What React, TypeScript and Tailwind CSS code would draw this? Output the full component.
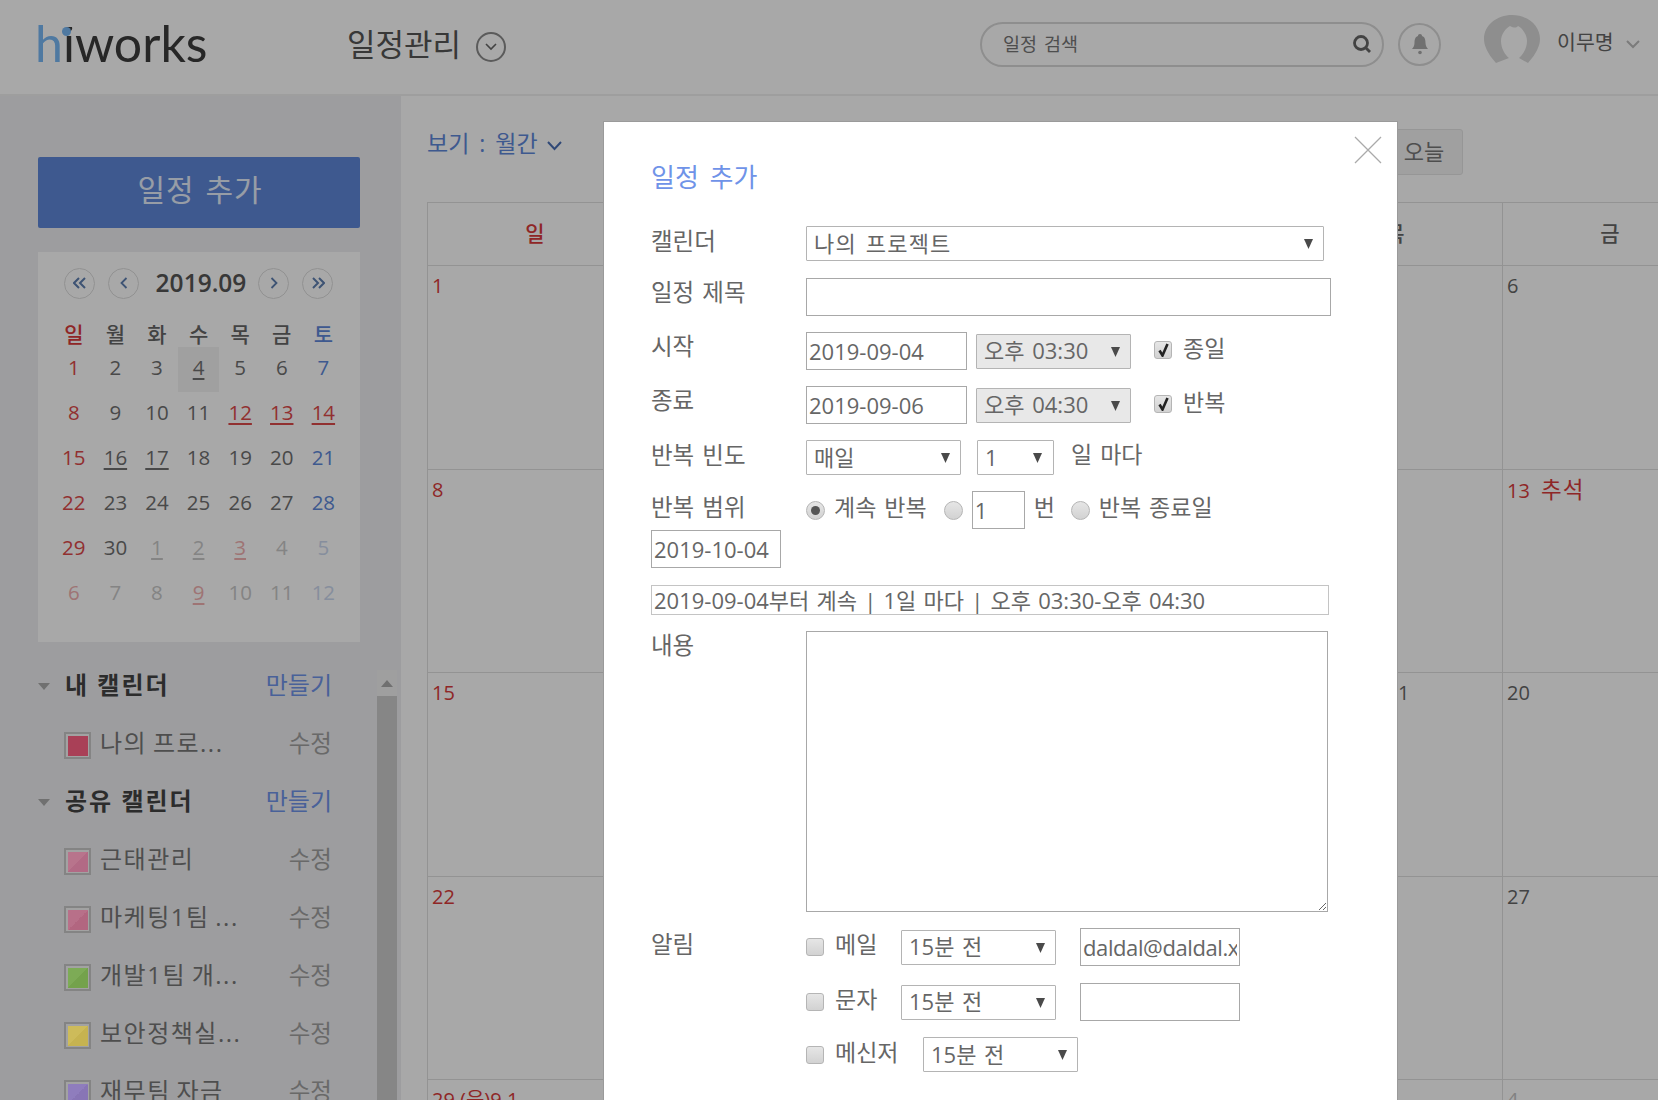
import React from "react";

const FONT = '"Open Sans","Noto Sans CJK KR",sans-serif';

const Arrow = () => (
  <svg width="9" height="11" viewBox="0 0 9 11" className="shrink-0">
    <path d="M0 1h9L4.500 11z" fill="#4a4a4a" />
  </svg>
);

function Select({ w, h = 35, text, disabled, pr = 10, className = "" }: { w: number; h?: number; text: string; disabled?: boolean; pr?: number; className?: string }) {
  return (
    <div
      style={{ width: w, height: h, paddingRight: pr }}
      className={`flex items-center justify-between shrink-0 rounded-[1px] border border-[#b4b4b4] pl-[7px] text-[22px] leading-[26px] text-[#666] [word-spacing:2px] ${disabled ? "bg-[#e8e8e8]" : "bg-white"} ${className}`}
    >
      <span className="pb-[2px]">{text}</span>
      <Arrow />
    </div>
  );
}

function Input({ w, h = 38, value = "", className = "" }: { w: number; h?: number; value?: string; className?: string }) {
  return (
    <input
      readOnly
      value={value}
      style={{ width: w, height: h }}
      className={`shrink-0 border border-[#a8a8a8] bg-white px-[2px] text-[22px] text-[#666] outline-none ${className}`}
    />
  );
}

function Check({ on, className = "" }: { on?: boolean; className?: string }) {
  return (
    <span className={`flex h-[18px] w-[18px] shrink-0 items-center justify-center rounded-[3px] border border-[#b5b5b5] bg-gradient-to-b from-[#e6e6e6] to-[#d2d2d2] ${className}`}>
      {on && (
        <svg width="13" height="14" viewBox="0 0 13 14">
          <path d="M2.500 7.500l3 5 5-11.500" fill="none" stroke="#222" strokeWidth="2.600" />
        </svg>
      )}
    </span>
  );
}

function Radio({ on, className = "" }: { on?: boolean; className?: string }) {
  return (
    <span className={`flex h-[19px] w-[19px] shrink-0 items-center justify-center rounded-full border border-[#b5b5b5] bg-gradient-to-b from-[#e6e6e6] to-[#d2d2d2] ${className}`}>
      {on && <span className="h-[9px] w-[9px] rounded-full bg-[#555]" />}
    </span>
  );
}

function Label({ children, className = "pb-[6px]" }: { children: React.ReactNode; className?: string }) {
  return <div className={`w-[155px] shrink-0 text-[23.500px] leading-[26px] text-[#666] [word-spacing:2px] ${className}`}>{children}</div>;
}

const T = ({ children, className = "" }: { children: React.ReactNode; className?: string }) => (
  <span className={`whitespace-nowrap text-[23px] leading-[26px] text-[#666] [word-spacing:2px] ${className}`}>{children}</span>
);

function Modal() {
  return (
    <div className="absolute left-[603px] top-[121px] h-[990px] w-[795px] border border-[#9a9a9a] bg-white pl-[47px] pt-[38px]">
      <svg width="28" height="28" viewBox="0 0 28 28" className="absolute left-[750px] top-[14px]">
        <path d="M1 1l26 26M27 1L1 27" stroke="#aaa" strokeWidth="1.300" fill="none" />
      </svg>
      <div className="h-[34px] text-[26px] leading-[34px] text-[#6f93e8] [word-spacing:4px]">일정 추가</div>

      <div className="mt-[32px] flex items-center">
        <Label>캘린더</Label>
        <Select w={518} text="나의 프로젝트" className="tracking-[1.200px]" />
      </div>
      <div className="mt-[17px] flex items-center">
        <Label className="pb-[10px]">일정 제목</Label>
        <Input w={525} />
      </div>
      <div className="mt-[16px] flex items-center">
        <Label className="pb-[10px]">시작</Label>
        <Input w={161} value="2019-09-04" />
        <Select w={155} text="오후 03:30" disabled className="ml-[9px]" />
        <Check on className="mb-[2px] ml-[23px]" />
        <T className="ml-[11px] pb-[6px]">종일</T>
      </div>
      <div className="mt-[16px] flex items-center">
        <Label className="pb-[10px]">종료</Label>
        <Input w={161} value="2019-09-06" />
        <Select w={155} text="오후 04:30" disabled className="ml-[9px]" />
        <Check on className="mb-[2px] ml-[23px]" />
        <T className="ml-[11px] pb-[6px]">반복</T>
      </div>
      <div className="mt-[16px] flex items-center">
        <Label>반복 빈도</Label>
        <Select w={155} text="매일" />
        <Select w={77} text="1" className="ml-[16px]" pr={11} />
        <T className="ml-[17px] pb-[8px]">일 마다</T>
      </div>
      <div className="mt-[16px] flex items-center">
        <Label>반복 범위</Label>
        <Radio on />
        <T className="ml-[9px] pb-[6px]">계속 반복</T>
        <Radio className="ml-[17px]" />
        <Input w={53} value="1" className="ml-[9px]" />
        <T className="ml-[9px] pb-[6px]">번</T>
        <Radio className="ml-[16px]" />
        <T className="ml-[9px] pb-[6px]">반복 종료일</T>
      </div>
      <div className="mt-[1px]">
        <Input w={130} value="2019-10-04" className="block" />
      </div>
      <div className="mt-[17px]">
        <Input w={678} h={30} value="2019-09-04부터 계속 | 1일 마다 | 오후 03:30-오후 04:30" className="block border-[#c4c4c4] px-[1px] [word-spacing:1.500px]" />
      </div>
      <div className="mt-[16px] flex items-start">
        <Label className="pt-[1px]">내용</Label>
        <textarea readOnly className="block h-[281px] w-[522px] border border-[#a8a8a8] bg-white outline-none" />
      </div>
      <div className="mt-[16px] flex items-center">
        <Label>알림</Label>
        <Check />
        <T className="ml-[11px] w-[66px] pb-[6px]">메일</T>
        <Select w={155} text="15분 전" />
        <Input w={160} value="daldal@daldal.xx" className="ml-[24px] tracking-[-0.400px]" />
      </div>
      <div className="mt-[17px] flex items-center">
        <div className="w-[155px]" />
        <Check />
        <T className="ml-[11px] w-[66px] pb-[6px]">문자</T>
        <Select w={155} text="15분 전" />
        <Input w={160} className="ml-[24px]" />
      </div>
      <div className="mt-[16px] flex items-center">
        <div className="w-[155px]" />
        <Check />
        <T className="ml-[11px] w-[88px] pb-[6px]">메신저</T>
        <Select w={155} text="15분 전" />
      </div>
    </div>
  );
}

function Header() {
  return (
    <header className="relative flex h-[96px] shrink-0 items-center border-b-2 border-[#f0f0f0] bg-white pb-[6px] pl-[38px]">
      <div className="relative w-[309px] pb-[3px]">
        <span className="-ml-[3px] text-[50px] leading-none text-[#3c3c3c]" style={{ fontFamily: "Lato, sans-serif" }}>
          <span className="text-[#78b8f5]">h</span>iworks
        </span>
        <span className="absolute left-[23px] top-[1px] h-[8px] w-[12px] bg-white" />
        <span className="absolute left-[24px] top-[9px] h-[9px] w-[9px] rounded-full bg-[#78b8f5]" />
      </div>
      <span className="text-[31px] leading-[40px] text-[#555]">일정관리</span>
      <span className="ml-[15px] mt-[6px] flex h-[30px] w-[30px] items-center justify-center rounded-full border-2 border-[#8a8a8a]">
        <svg width="12" height="8" viewBox="0 0 12 8"><path d="M1 1l5 5 5-5" fill="none" stroke="#666" strokeWidth="1.600" /></svg>
      </span>
      <div className="ml-[474px] flex h-[45px] w-[404px] items-center justify-between rounded-full border-2 border-[#d8d8d8] pl-[21px] pr-[10px]">
        <span className="text-[18.500px] text-[#777] [word-spacing:2px]">일정 검색</span>
        <svg width="20" height="20" viewBox="0 0 20 20"><circle cx="9" cy="9" r="6.500" fill="none" stroke="#666" strokeWidth="2.800" /><path d="M13 13l5 5" stroke="#666" strokeWidth="2.800" /></svg>
      </div>
      <div className="ml-[14px] flex h-[43px] w-[43px] items-center justify-center rounded-full border-2 border-[#d8d8d8]">
        <svg width="18" height="22" viewBox="0 0 18 22"><path d="M9 1c1.300 0 2 .9 2 2 3 1 3.500 4 3.500 7 0 3 1.500 5 2.500 6H1c1-1 2.500-3 2.500-6 0-3 .5-6 3.500-7 0-1.100.7-2 2-2z" fill="#aaa" /><circle cx="9" cy="19.500" r="1.800" fill="#aaa" /></svg>
      </div>
      <svg width="56" height="52" viewBox="0 0 56 52" className="mb-[6px] ml-[43px]">
        <path d="M12 48C3 38 0 30 0 24 0 10 13 0 28 0s28 10 28 24c0 6-3 14-12 24l-9-5c4-3 8-10 8-17 0-7-6-14-9-15-2 2-4 2-8 0-4 2-9 8-9 15 0 7 4 14 8 17z" fill="#d8d8d8" />
      </svg>
      <span className="ml-[17px] pb-[3px] text-[20.500px] text-[#666]">이무명</span>
      <svg width="14" height="9" viewBox="0 0 14 9" className="ml-[12px]"><path d="M1 1l6 6 6-6" fill="none" stroke="#bbb" strokeWidth="2" /></svg>
    </header>
  );
}

const DATES: [string, string, boolean?][][] = [
  [["1", "r"], ["2", "d"], ["3", "d"], ["4", "d", true], ["5", "d"], ["6", "d"], ["7", "b"]],
  [["8", "r"], ["9", "d"], ["10", "d"], ["11", "d"], ["12", "r", true], ["13", "r", true], ["14", "r", true]],
  [["15", "r"], ["16", "d", true], ["17", "d", true], ["18", "d"], ["19", "d"], ["20", "d"], ["21", "b"]],
  [["22", "r"], ["23", "d"], ["24", "d"], ["25", "d"], ["26", "d"], ["27", "d"], ["28", "b"]],
  [["29", "r"], ["30", "d"], ["1", "g", true], ["2", "g", true], ["3", "p", true], ["4", "g"], ["5", "q"]],
  [["6", "p"], ["7", "g"], ["8", "g"], ["9", "p", true], ["10", "g"], ["11", "g"], ["12", "q"]],
];
const COLORS: Record<string, string> = {
  r: "text-[#dd4a4a]",
  d: "text-[#707070]",
  b: "text-[#5e88d9]",
  g: "text-[#c8c8c8]",
  p: "text-[#f0b0b0]",
  q: "text-[#ccd8ee]",
};

function Circle({ children, className = "" }: { children: React.ReactNode; className?: string }) {
  return <span className={`flex h-[31px] w-[31px] items-center justify-center rounded-full border border-[#ddd] text-[#5e7fb0] ${className}`}>{children}</span>;
}

function MiniCalendar() {
  return (
    <div className="mt-[24px] h-[390px] w-[322px] bg-white pt-[15px]">
      <div className="flex h-[32px] items-center pl-[26px]">
        <Circle>
          <svg width="14" height="12" viewBox="0 0 14 12"><path d="M6 1L1 6l5 5M12 1L7 6l5 5" fill="none" stroke="currentColor" strokeWidth="2" /></svg>
        </Circle>
        <Circle className="ml-[13px]">
          <svg width="8" height="12" viewBox="0 0 8 12"><path d="M6.500 1L1.500 6l5 5" fill="none" stroke="currentColor" strokeWidth="1.800" /></svg>
        </Circle>
        <span className="w-[119px] pl-[5px] text-center text-[24.500px] font-semibold leading-[32px] text-[#555]">2019.09</span>
        <Circle>
          <svg width="8" height="12" viewBox="0 0 8 12"><path d="M1.500 1l5 5-5 5" fill="none" stroke="currentColor" strokeWidth="1.800" /></svg>
        </Circle>
        <Circle className="ml-[13px]">
          <svg width="14" height="12" viewBox="0 0 14 12"><path d="M2 1l5 5-5 5M8 1l5 5-5 5" fill="none" stroke="currentColor" strokeWidth="2" /></svg>
        </Circle>
      </div>
      <div className="ml-[15px] mt-[19px] grid grid-cols-[repeat(7,41.600px)] text-center">
        {["일", "월", "화", "수", "목", "금", "토"].map((d, i) => (
          <span key={d} className={`h-[29px] text-[21px] font-medium leading-[32px] ${i === 0 ? "text-[#d93a3a]" : i === 6 ? "text-[#5e88d9]" : "text-[#666]"}`}>
            {d}
          </span>
        ))}
        {DATES.flat().map(([t, c, u], i) => (
          <span key={i} className={`flex h-[45px] items-center justify-center pb-[4px] text-[20.500px] ${i === 3 ? "bg-[#f3f3f3]" : ""} ${COLORS[c]}`}>
            <span className={u ? "underline underline-offset-[3px]" : ""}>{t}</span>
          </span>
        ))}
      </div>
    </div>
  );
}

function SectionRow({ title }: { title: string }) {
  return (
    <div className="flex h-[58px] items-center">
      <svg width="12" height="7" viewBox="0 0 12 7" className="mr-[2px] shrink-0"><path d="M0 0h12L6 7z" fill="#aaa" /></svg>
      <span className="ml-[13px] flex-1 pb-[2px] text-[24px] font-bold leading-[32px] tracking-[2px] text-[#444]">{title}</span>
      <span className="pb-[2px] text-[24px] leading-[32px] text-[#6f93e8]">만들기</span>
    </div>
  );
}

function ItemRow({ title, color }: { title: string; color: string }) {
  return (
    <div className="flex h-[58px] items-center pl-[26px]">
      <span className="mt-[3px] flex h-[27px] w-[27px] shrink-0 items-center justify-center border-2 border-[#c8c8c8] bg-[#f6f6f6]">
        <span className="relative z-10 h-[20px] w-[20px]" style={{ background: color }} />
      </span>
      <span className="ml-[9px] flex-1 whitespace-nowrap pb-[2px] text-[24px] leading-[32px] tracking-[1.500px] text-[#777] [word-spacing:-2px]">{title}</span>
      <span className="pb-[2px] text-[23.500px] leading-[32px] text-[#a0a0a0]">수정</span>
    </div>
  );
}

function Sidebar() {
  return (
    <aside className="w-[401px] shrink-0 overflow-hidden bg-[#eeeff1] pl-[38px] pt-[61px]">
      <div className="flex h-[71px] w-[322px] items-center justify-center rounded-[2px] bg-[#5e88d9] pb-[6px] pl-[2px] text-[30px] leading-[40px] tracking-[1px] text-[#e6eefc] [word-spacing:2px]">일정 추가</div>
      <MiniCalendar />
      <div className="mt-[28px] flex">
        <div className="-mt-[13px] w-[294px]">
          <SectionRow title="내 캘린더" />
          <ItemRow title="나의 프로..." color="#a94057" />
          <SectionRow title="공유 캘린더" />
          <ItemRow title="근태관리" color="linear-gradient(135deg,#b8748c 50%,#b26a85 50%)" />
          <ItemRow title="마케팅1팀 ..." color="linear-gradient(135deg,#b87089 50%,#b26680 50%)" />
          <ItemRow title="개발1팀 개..." color="linear-gradient(135deg,#7dab56 50%,#74a24c 50%)" />
          <ItemRow title="보안정책실..." color="linear-gradient(135deg,#cdbb5a 50%,#c6b350 50%)" />
          <ItemRow title="재무팀 자금" color="linear-gradient(135deg,#8f7dbd 50%,#8875b5 50%)" />
        </div>
        <div className="ml-[45px] w-[20px]">
          <div className="flex h-[26px] items-center justify-center bg-[#f2f2f2]">
            <svg width="12" height="7" viewBox="0 0 12 7"><path d="M6 0l6 7H0z" fill="#aaa" /></svg>
          </div>
          <div className="h-[500px] bg-[#cbcbcb]" />
        </div>
      </div>
    </aside>
  );
}

function Cell({ children, head, peek }: { children?: React.ReactNode; head?: boolean; peek?: boolean }) {
  return (
    <div className={`relative border-b border-r border-[#e0e0e0] ${head ? "flex h-[63px] items-center justify-center text-[21px] font-medium" : "h-[203.500px] pl-[4px] pt-[5px] text-[20px]"}`}>
      {children}
      {peek && <span className="absolute left-[110px] top-[5px] text-[20px] text-[#666]">1</span>}
    </div>
  );
}

function MainArea() {
  const rows: React.ReactNode[][] = [
    ["1", "2", "3", "4", "5", "6", "7"],
    ["8", "9", "10", "11", "12", <span key="c" className="relative -top-[2px] [word-spacing:6px]">13 <span className="text-[22.500px] tracking-[1px]">추석</span></span>, "14"],
    ["15", "16", "17", "18", "19", "20", "21"],
    ["22", "23", "24", "25", "26", "27", "28"],
    ["29 (음)9.1", "30", "1", "2", "3", "4", "5"],
  ];
  return (
    <main className="min-w-0 flex-1 overflow-hidden bg-white pl-[26px] pt-[32px]">
      <div className="flex h-[46px] w-[1036px] items-start justify-between">
        <div className="flex items-center text-[#5e88d9]">
          <span className="text-[23px] leading-[30px] [word-spacing:4px]">보기 : 월간</span>
          <svg width="15" height="10" viewBox="0 0 15 10" className="ml-[9px] mt-[6px]"><path d="M1 1l6.500 7L14 1" fill="none" stroke="#4a6fb5" strokeWidth="2" /></svg>
        </div>
        <div className="mt-[1px] flex h-[46px] w-[78px] shrink-0 items-center justify-center rounded-[3px] border border-[#e4e4e4] bg-[#f3f3f3] pb-[3px] text-[22px] leading-[30px] text-[#777]">오늘</div>
      </div>
      <div className="mt-[28px] grid w-[1505px] grid-cols-[repeat(7,215px)] border-l border-t border-[#e0e0e0]">
        {["일", "월", "화", "수", "목", "금", "토"].map((d, i) => (
          <Cell key={d} head>
            <span className={i === 0 ? "text-[#d93a3a]" : "text-[#666]"}>{d}</span>
          </Cell>
        ))}
        {rows.flatMap((r, ri) =>
          r.map((t, ci) => (
            <Cell key={`${ri}-${ci}`} peek={ri === 2 && ci === 4}>
              <span className={ci === 0 || (ri === 1 && ci === 5) ? "text-[#d93a3a]" : ri === 4 && ci > 1 ? "text-[#c4c4c4]" : "text-[#666]"}>{t}</span>
            </Cell>
          ))
        )}
      </div>
    </main>
  );
}

export default function App() {
  return (
    <div className="relative flex h-[1100px] w-full flex-col overflow-hidden bg-white" style={{ fontFamily: FONT }}>
      <Header />
      <div className="flex min-h-0 flex-1">
        <Sidebar />
        <MainArea />
      </div>
      <div className="absolute inset-0 bg-black/[.34]" />
      <Modal />
    </div>
  );
}
